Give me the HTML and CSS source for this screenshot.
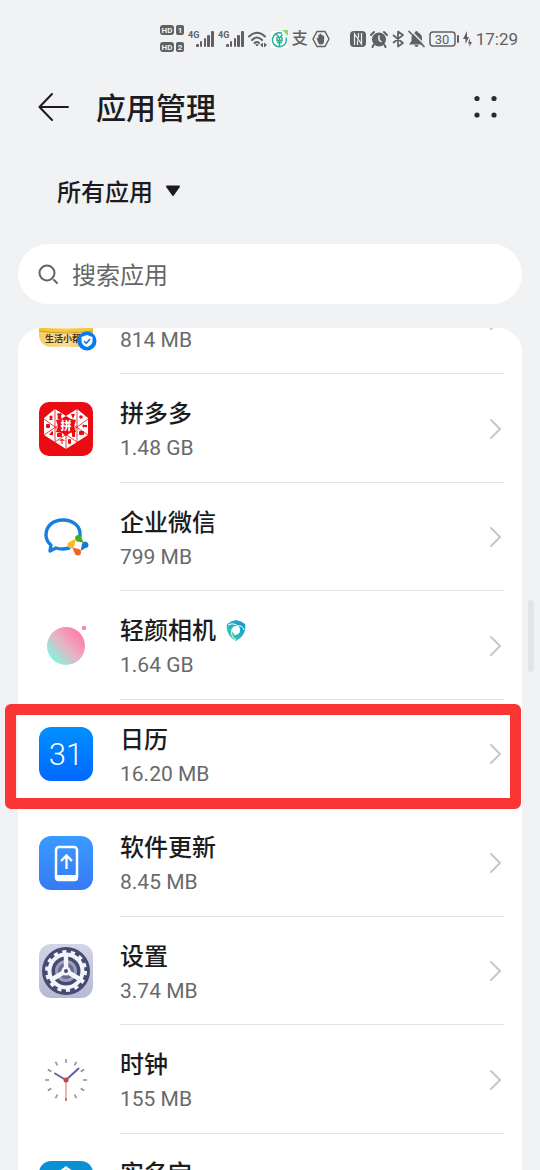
FILE: index.html
```
<!DOCTYPE html>
<html lang="zh-CN">
<head>
  <meta charset="UTF-8" />
  <meta name="viewport" content="width=device-width, initial-scale=1" />
  <title>应用管理</title>
  <link rel="stylesheet" href="styles.css">
</head>
<body>
  <div class="screen">

    <!-- Status bar -->
    <div class="status-bar">
      <div class="status-group">
        <svg class="hd" width="24" height="30" viewBox="0 0 24 30">
          <g fill="#5f6164">
            <rect x="0" y="1" width="14" height="10" rx="3"/><rect x="16" y="1" width="8" height="10" rx="2"/>
            <rect x="0" y="18" width="14" height="10" rx="3"/><rect x="16" y="18" width="8" height="10" rx="2"/>
          </g>
          <g class="hd-text">
            <text x="7" y="9" text-anchor="middle">HD</text><text x="20" y="9" text-anchor="middle">1</text>
            <text x="7" y="26" text-anchor="middle">HD</text><text x="20" y="26" text-anchor="middle">2</text>
          </g>
        </svg>
        <svg width="26" height="20" viewBox="0 0 26 20">
          <text class="net-text" x="0" y="9">4G</text>
          <g fill="#5f6164"><rect x="8" y="15" width="3" height="3" rx="1"/><rect x="12" y="12" width="2" height="6" rx="1"/><rect x="16" y="9" width="2" height="9" rx="1"/><rect x="19" y="6" width="3" height="12" rx="1"/><rect x="23" y="2" width="3" height="16" rx="1"/></g>
        </svg>
        <svg width="26" height="20" viewBox="0 0 26 20">
          <text class="net-text" x="0" y="9">4G</text>
          <g fill="#5f6164"><rect x="8" y="15" width="3" height="3" rx="1"/><rect x="12" y="12" width="2" height="6" rx="1"/><rect x="16" y="9" width="2" height="9" rx="1"/><rect x="19" y="6" width="3" height="12" rx="1"/><rect x="23" y="2" width="3" height="16" rx="1"/></g>
        </svg>
        <svg width="19" height="18" viewBox="0 0 19 18" fill="none" stroke="#5f6164" stroke-width="2" stroke-linecap="round">
          <path d="M1 6.500Q9 -1 17 6.500M4 10Q9 5 14 10M6.500 13Q9 11 11 13"/>
          <path d="M8 15l1 1 1-1z" fill="#5f6164" stroke-width="1"/>
          <path d="M12 15l3-2.500v5zM19 15l-3-2.500v5z" fill="#5f6164" stroke="none"/>
        </svg>
        <svg width="17" height="18" viewBox="0 0 17 18">
          <path fill="#fff" d="M0 1h17v17H0z"/><path fill="#8bdc62" d="M11 0h6v6z"/>
          <path fill="none" stroke="#28ad9c" stroke-width="1.500" d="M11 3.300A7 7 0 1 0 15 7.500M5.500 4.500L8.500 8l3-3.500M8.500 8v8M6 7v3.500h5V7M6 12.500h5"/>
        </svg>
        <span class="pay">支</span>
        <svg width="18" height="18" viewBox="0 0 18 18">
          <path d="M5 1.500h8L17 9l-4 7.500H5L1 9z" fill="none" stroke="#5f6164" stroke-width="1.500" stroke-linejoin="round"/>
          <path d="M4.500 8q1-.7 1.800.5V5q.6-1 1.300 0V4q.8-1 1.500 0v1q.8-1 1.500 0v1q.8-.8 1.500 0v5q0 3.500-3.300 3.500-2.300 0-2.800-2z" fill="#5f6164"/>
        </svg>
      </div>
      <div class="status-group">
        <svg width="16" height="16" viewBox="0 0 16 16">
          <rect x="0" y="0" width="16" height="16" rx="4" fill="#5f6164"/>
          <path d="M4.500 14V3l7 10V2M7.500 9.500V14M8.500 2v5" fill="none" stroke="#f1f2f4" stroke-width="1.200"/>
        </svg>
        <svg width="18" height="18" viewBox="0 0 18 18">
          <circle cx="9" cy="9.500" r="7" fill="#5f6164"/>
          <path d="M1 5l3-3M17 5l-3-3M3.500 15l-1 2M14.500 15l1 2" stroke="#5f6164" stroke-width="2" stroke-linecap="round"/>
          <path d="M9 5.500v4.500l2.500 2" fill="none" stroke="#f1f2f4" stroke-width="1.500"/>
        </svg>
        <svg width="12" height="18" viewBox="0 0 12 18" fill="none" stroke="#5f6164" stroke-width="1.700" stroke-linejoin="round">
          <path d="M1 5l10 8-5 3.500V1.500L11 5 1 13"/>
        </svg>
        <svg width="17" height="18" viewBox="0 0 17 18">
          <path d="M8.500 1q1.500 0 1.500 1.500Q14 4 14 8v3l2 3.500H1L3.500 11V8q0-4 3.500-5.500Q7 1 8.500 1zM6.500 15h4q-.5 2-2 2t-2-2z" fill="#5f6164"/>
          <path d="M2 0l15 15" stroke="#f1f2f4" stroke-width="1.500"/>
          <path d="M1 1.500l15 15" stroke="#5f6164" stroke-width="1.700" stroke-linecap="round"/>
        </svg>
        <svg width="30" height="16" viewBox="0 0 30 16">
          <rect x="1" y="1" width="25" height="14" rx="3" fill="none" stroke="#5f6164" stroke-width="1.500"/>
          <rect x="28" y="4" width="2" height="8" rx="1" fill="#5f6164"/>
          <text class="battery-text" x="13" y="13" text-anchor="middle">30</text>
        </svg>
        <svg width="9" height="16" viewBox="0 0 9 16" fill="#5f6164">
          <path d="M4 0v6h2L2.500 13V8H0zM7 7v4h2l-2.500 5v-3.500H5z"/>
        </svg>
        <span class="clock">17:29</span>
      </div>
    </div>

    <!-- Title -->
    <header class="title-bar">
      <button class="icon-btn" aria-label="返回">
        <svg width="32" height="30" viewBox="0 0 32 30" fill="none" stroke="#1c1c1e" stroke-width="2" stroke-linecap="round" stroke-linejoin="round">
          <path d="M14 2L1.500 15 14 28M2 15h28"/>
        </svg>
      </button>
      <h1>应用管理</h1>
      <button class="icon-btn" aria-label="更多">
        <svg width="24" height="24" viewBox="0 0 24 24" fill="#2b2b2d">
          <circle cx="3" cy="3.500" r="2.600"/><circle cx="20" cy="3.500" r="2.600"/><circle cx="3" cy="20" r="2.600"/><circle cx="20" cy="20" r="2.600"/>
        </svg>
      </button>
    </header>

    <label class="filter">
      <select aria-label="应用范围">
        <option>所有应用</option>
      </select>
      <svg width="16" height="12" viewBox="0 0 16 12"><path d="M2 1.500h12L8 10z" fill="#1c1c1e" stroke="#1c1c1e" stroke-width="2" stroke-linejoin="round"/></svg>
    </label>

    <label class="search">
      <svg width="22" height="22" viewBox="0 0 22 22" fill="none" stroke="#636466" stroke-width="2" stroke-linecap="round"><circle cx="9" cy="10" r="7.500"/><path d="M16 17l3 3"/></svg>
      <input type="search" placeholder="搜索应用" aria-label="搜索应用">
    </label>

    <!-- App list -->
    <main class="app-card">
      <ul class="app-list">
        <li class="app">
          <a href="#">
            <svg class="app-icon helper" viewBox="0 0 54 54">
              <defs><linearGradient id="gold" x1="0" y1="0" x2="1" y2="0"><stop offset="0" stop-color="#f3cd6c"/><stop offset=".5" stop-color="#fae09a"/><stop offset="1" stop-color="#edc15b"/></linearGradient></defs>
              <rect width="54" height="54" rx="12" fill="url(#gold)"/>
              <path d="M0 36Q27 40 54 36" fill="none" stroke="#f6c928" stroke-width="3"/>
              <path d="M0 38Q27 42 54 38" fill="none" stroke="#c7953c" stroke-width="1"/>
              <text class="helper-text" x="6" y="49">生活小帮</text>
              <circle cx="48" cy="48" r="9.500" fill="#087bf3"/>
              <path d="M48 42l5.500 2v4q0 4-5.500 6-5.500-2-5.500-6v-4z" fill="#fff"/>
              <path d="M45 48l2.300 2.300L51 46" fill="none" stroke="#087bf3" stroke-width="1.500"/>
            </svg>
            <span class="app-text"><span class="app-name"></span><span class="app-size">814 MB</span></span>
            <svg class="chevron" viewBox="0 0 12 22"><path d="M2 2l9 9-9 9"/></svg>
          </a>
        </li>
        <li class="app">
          <a href="#">
            <svg class="app-icon" viewBox="0 0 54 54">
              <rect width="54" height="54" rx="10" fill="#eb0b12"/>
              <path d="M16 7l11 7 11-7 11 9v17L27 47 5 33V16z" fill="#fff"/>
              <path d="M16 7v33M38 7v33M5 17l11 8M5 33l22-15M49 17l-11 8M49 33L27 18M16 25l22 15M38 25L16 40M27 33v14" fill="none" stroke="#eb0b12" stroke-width="0.800"/>
              <path d="M27 14l5 3 5 1-2 6 2 6-6 1-4 3-4-3-6-1 2-6-2-6 5-1z" fill="#eb0b12"/>
              <text class="pdd-text" x="27" y="28" text-anchor="middle">拼</text>
              <g fill="#eb0b12">
                <circle cx="12" cy="15" r="1.600"/><path d="M10 18l2-3 2 3z"/>
                <path d="M18 12l1.500-1 1 .7 1-.7 1.500 1-.8 1.500v3.500h-3.500V13.500z"/>
                <path d="M32 12h4l-2 5z"/><circle cx="42" cy="15" r="1.800"/>
                <rect x="7" y="22" width="4" height="4" rx="1"/>
                <path d="M43 24l2-2v1h3v2h-3v1z"/>
                <path d="M10 33l3-4 1 1v3z"/>
                <rect x="18" y="31" width="5" height="4" rx="1"/>
                <rect x="33" y="29" width="3" height="6" rx="1"/>
                <rect x="40" y="29" width="5" height="4" rx="1"/>
                <path d="M20 39q3-4 6 0l-2.500-.5v3.500h-1v-3.500z"/>
                <rect x="29" y="37" width="3" height="5" rx="1"/>
              </g>
            </svg>
            <span class="app-text"><span class="app-name">拼多多</span><span class="app-size">1.48 GB</span></span>
            <svg class="chevron" viewBox="0 0 12 22"><path d="M2 2l9 9-9 9"/></svg>
          </a>
        </li>
        <li class="app">
          <a href="#">
            <svg class="app-icon" viewBox="0 0 54 54">
              <path d="M41 26C42 16 34 10 24 10S7 16 7 25q0 6 5 10l-1 6 6-3q6 2 13 0" fill="none" stroke="#187fe0" stroke-width="3.400" stroke-linecap="round" stroke-linejoin="round"/>
              <path d="M39 26l10 9-10 10-9-10z" fill="#fff"/>
              <path d="M36 28.500q0-3.500 3.500-3.500 3 0 3 3l2.500 5q-4-1.500-7-1.500-2-1-2-3z" fill="#42ad20"/>
              <path d="M46 31.500q3.500.5 3.500 3.500t-3 3l-5 3q1.300-4 1.300-6.500 1-3 3.200-3z" fill="#147bd7"/>
              <path d="M42 42q0 3.500-3 3.500t-3.500-3L33 37q4 2 7 2 2 1 2 3z" fill="#f2641c"/>
              <path d="M32 38q-3.500 0-3.500-3t3-3.500l5.500-3q-1.500 4-1.500 7-1 2.500-3.500 2.500z" fill="#fdb91f"/>
            </svg>
            <span class="app-text"><span class="app-name">企业微信</span><span class="app-size">799 MB</span></span>
            <svg class="chevron" viewBox="0 0 12 22"><path d="M2 2l9 9-9 9"/></svg>
          </a>
        </li>
        <li class="app">
          <a href="#">
            <svg class="app-icon" viewBox="0 0 54 54">
              <defs><linearGradient id="ball" x1=".85" y1=".2" x2=".15" y2=".85"><stop offset="0" stop-color="#ff80a8"/><stop offset=".5" stop-color="#e7b4c4"/><stop offset="1" stop-color="#85f2dc"/></linearGradient></defs>
              <circle cx="27" cy="27" r="19" fill="url(#ball)"/><circle cx="45" cy="9" r="2.300" fill="#f58cab"/>
            </svg>
            <span class="app-text">
              <span class="app-name">轻颜相机
                <svg width="20" height="22" viewBox="0 0 20 22">
                  <defs><linearGradient id="swirl" x1="1" y1="0" x2="0" y2="1"><stop offset="0" stop-color="#168bd0"/><stop offset=".5" stop-color="#20b6c0"/><stop offset="1" stop-color="#42dba0"/></linearGradient></defs>
                  <path d="M10 0q5 1 9 4 2 11-9 17Q-1 15 1 4q4-3 9-4z" fill="url(#swirl)"/>
                  <circle cx="10" cy="10" r="4" fill="#fff"/>
                  <path d="M2 5q6-3 11 2M6 9q-2 7 4 11M13.500 9Q14 15 8 14.500M11 6q6-1 7 4" fill="none" stroke="#fff" stroke-width="1"/>
                </svg>
              </span>
              <span class="app-size">1.64 GB</span>
            </span>
            <svg class="chevron" viewBox="0 0 12 22"><path d="M2 2l9 9-9 9"/></svg>
          </a>
        </li>
        <li class="app marked">
          <a href="#">
            <svg class="app-icon" viewBox="0 0 54 54">
              <defs><linearGradient id="cal" x1="0" y1="0" x2="0" y2="1"><stop offset="0" stop-color="#0091ff"/><stop offset=".6" stop-color="#0077ff"/><stop offset="1" stop-color="#0069fe"/></linearGradient></defs>
              <rect width="54" height="54" rx="12" fill="url(#cal)"/>
              <text class="cal-text" x="27" y="38" text-anchor="middle">31</text>
            </svg>
            <span class="app-text"><span class="app-name">日历</span><span class="app-size">16.20 MB</span></span>
            <svg class="chevron" viewBox="0 0 12 22"><path d="M2 2l9 9-9 9"/></svg>
          </a>
        </li>
        <li class="app">
          <a href="#">
            <svg class="app-icon" viewBox="0 0 54 54">
              <defs><linearGradient id="upd" x1="0" y1="0" x2="0" y2="1"><stop offset="0" stop-color="#3a9bff"/><stop offset="1" stop-color="#367af4"/></linearGradient></defs>
              <rect width="54" height="54" rx="12" fill="url(#upd)"/>
              <rect x="17" y="11" width="21" height="33" rx="3" fill="none" stroke="#fff" stroke-width="2.500"/>
              <path d="M16 39h23v3q0 3-3 3H19q-3 0-3-3z" fill="#fff"/>
              <path d="M27.500 33V20M22 25l5.500-5.500L33 25" fill="none" stroke="#fff" stroke-width="2.300"/>
            </svg>
            <span class="app-text"><span class="app-name">软件更新</span><span class="app-size">8.45 MB</span></span>
            <svg class="chevron" viewBox="0 0 12 22"><path d="M2 2l9 9-9 9"/></svg>
          </a>
        </li>
        <li class="app">
          <a href="#">
            <svg class="app-icon" viewBox="0 0 54 54">
              <defs><linearGradient id="set" x1="0" y1="0" x2="0" y2="1"><stop offset="0" stop-color="#d2d5e6"/><stop offset="1" stop-color="#b5b9d3"/></linearGradient></defs>
              <rect width="54" height="54" rx="12" fill="url(#set)"/>
              <circle cx="27" cy="27" r="24" fill="#454a73"/>
              <circle cx="27" cy="27" r="19.500" fill="none" stroke="#f4f5fa" stroke-width="3" stroke-dasharray="4.200 4.550"/>
              <circle cx="27" cy="27" r="16.500" fill="none" stroke="#f4f5fa" stroke-width="4"/>
              <circle cx="27" cy="27" r="11" fill="#9b9fb9"/>
              <circle cx="27" cy="27" r="8" fill="#686d91"/>
              <path d="M27 27V11M27 27l13.500 8M27 27l-13.500 8" stroke="#f4f5fa" stroke-width="4.500"/>
              <circle cx="27" cy="27" r="4.500" fill="#f4f5fa"/><circle cx="27" cy="27" r="2" fill="#454a73"/>
            </svg>
            <span class="app-text"><span class="app-name">设置</span><span class="app-size">3.74 MB</span></span>
            <svg class="chevron" viewBox="0 0 12 22"><path d="M2 2l9 9-9 9"/></svg>
          </a>
        </li>
        <li class="app">
          <a href="#">
            <svg class="app-icon" viewBox="0 0 54 54">
              <path d="M27 6v4M27 44v3M6 27h4M44 27h4M16.500 8.800l2 3.500M37.500 8.800l-2 3.500M8.800 16.500l3.500 2M45.200 16.500l-3.500 2M8.800 37.500l3.500-2M45.200 37.500l-3.500-2M16.500 45.200l2-3.500M37.500 45.200l-2-3.500" stroke="#8c8c97" stroke-width="1.500"/>
              <path d="M27 27L16 20.500M27 27l12.500-11.500" stroke="#6460a5" stroke-width="2" stroke-linecap="round"/>
              <path d="M27 27v21" stroke="#efb7ac" stroke-width="2"/><path d="M27 45v3" stroke="#d4766b" stroke-width="2"/>
              <circle cx="27" cy="27" r="2.500" fill="#bb4a4b"/>
            </svg>
            <span class="app-text"><span class="app-name">时钟</span><span class="app-size">155 MB</span></span>
            <svg class="chevron" viewBox="0 0 12 22"><path d="M2 2l9 9-9 9"/></svg>
          </a>
        </li>
        <li class="app">
          <a href="#">
            <svg class="app-icon" viewBox="0 0 54 54">
              <rect width="54" height="54" rx="12" fill="#0a91d3"/>
              <path d="M10 14Q20 11 27 5q7 6 17 9v18q-4 12-17 18Q14 44 10 32z" fill="#fff"/>
              <path d="M14 16q8-3 13-8 5 5 13 8v16q-4 9-13 14-9-5-13-14z" fill="#48a8d6"/>
            </svg>
            <span class="app-text"><span class="app-name">实名宝</span><span class="app-size"></span></span>
            <svg class="chevron" viewBox="0 0 12 22"><path d="M2 2l9 9-9 9"/></svg>
          </a>
        </li>
      </ul>
    </main>

    <div class="scroll-thumb"></div>
  </div>
</body>
</html>
```
FILE: styles.css
```
* {
  box-sizing: border-box;
}

body {
  margin: 0;
  background: #f1f2f4;
  color: #1c1c1e;
  font-family: Roboto, "Noto Sans CJK SC", sans-serif;
}

svg {
  display: block;
  flex-shrink: 0;
}

.screen {
  position: relative;
  display: flex;
  flex-direction: column;
  height: 100vh;
  overflow: hidden;
}

/* Status bar */
.status-bar {
  display: flex;
  justify-content: flex-end;
  gap: 20px;
  height: 70px;
  padding: 8px 22px 0 0;
  color: #5f6164;
}

.status-group {
  display: flex;
  align-items: center;
  gap: 4px;
}

.hd-text {
  fill: #f1f2f4;
  font-size: 8px;
  font-weight: 700;
}

.net-text {
  fill: #5f6164;
  font-size: 9px;
  font-weight: 700;
}

.pay {
  width: 16px;
  font-size: 16px;
  font-weight: 500;
  line-height: 20px;
}

.battery-text {
  fill: #5f6164;
  font-size: 13px;
}

.clock {
  font-size: 17px;
  line-height: 20px;
}

/* Title */
.title-bar {
  display: flex;
  align-items: center;
  height: 74px;
  padding: 0 42px 0 38px;
}

.icon-btn {
  padding: 0;
  border: none;
  background: none;
  cursor: pointer;
}

h1 {
  flex: 1;
  margin: 0 0 0 26px;
  padding-top: 4px;
  font-size: 30px;
  font-weight: 500;
  line-height: 44px;
}

.filter {
  display: flex;
  align-items: center;
  gap: 12px;
  height: 94px;
  padding-left: 57px;
}

.filter select {
  appearance: none;
  padding: 4px 0 0;
  border: none;
  background: none;
  color: #1c1c1e;
  font-family: inherit;
  font-size: 24px;
  font-weight: 500;
  line-height: 36px;
}

/* Search box */
.search {
  display: flex;
  align-items: center;
  gap: 12px;
  height: 60px;
  margin: 6px 18px 24px;
  padding: 0 20px;
  border-radius: 30px;
  background: #fff;
}

.search input {
  flex: 1;
  min-width: 0;
  padding: 4px 0 0;
  border: none;
  outline: none;
  background: none;
  font-family: inherit;
  font-size: 24px;
  line-height: 36px;
}

.search input::placeholder {
  color: #666;
  opacity: 1;
}

/* App list, scrolled part of the way through the first row */
.app-card {
  flex: 1;
  min-height: 0;
  margin: 0 18px;
  border-radius: 24px 24px 0 0;
  background: #fff;
  overflow-x: visible;
  overflow-y: clip;
}

.app-list {
  margin: -62px 0 0;
  padding: 0;
  list-style: none;
}

.app {
  position: relative;
}

.app a {
  display: flex;
  align-items: center;
  padding-left: 21px;
  color: inherit;
  text-decoration: none;
}

.app a::after {
  content: "";
  width: 18px;
}

.app-icon {
  width: 54px;
  height: 54px;
  overflow: visible;
}

.app-text {
  flex: 1;
  display: flex;
  flex-direction: column;
  height: 109px;
  margin-left: 27px;
  padding-top: 23px;
  border-bottom: 1px solid #e2e2e2;
}

.app:nth-child(odd) .app-text {
  height: 108px;
}

.app-name {
  display: flex;
  align-items: center;
  gap: 10px;
  height: 34px;
  font-size: 24px;
  font-weight: 500;
  line-height: 34px;
}

.app-size {
  height: 34px;
  color: #68696b;
  font-size: 21px;
  line-height: 34px;
}

.chevron {
  width: 12px;
  height: 24px;
  margin-left: -15px;
  margin-right: 3px;
  fill: none;
  stroke: #c8c8c9;
  stroke-width: 2;
  stroke-linecap: round;
}

.helper-text {
  fill: #4a3219;
  font-size: 9px;
  font-weight: 700;
}

.pdd-text {
  fill: #fff;
  font-size: 11px;
  font-weight: 900;
}

.cal-text {
  fill: #fff;
  font-size: 31px;
  font-weight: 300;
}

/* Red frame round the calendar row */
.marked .app-text {
  border-bottom: none;
}

.marked::after {
  content: "";
  position: absolute;
  inset: 4px 1px -1px -13px;
  border: 11px solid #f93535;
  border-radius: 6px;
  pointer-events: none;
}

.scroll-thumb {
  position: absolute;
  top: 600px;
  right: 6px;
  width: 6px;
  height: 72px;
  border-radius: 3px;
  background: #e3e4e6;
}
```
